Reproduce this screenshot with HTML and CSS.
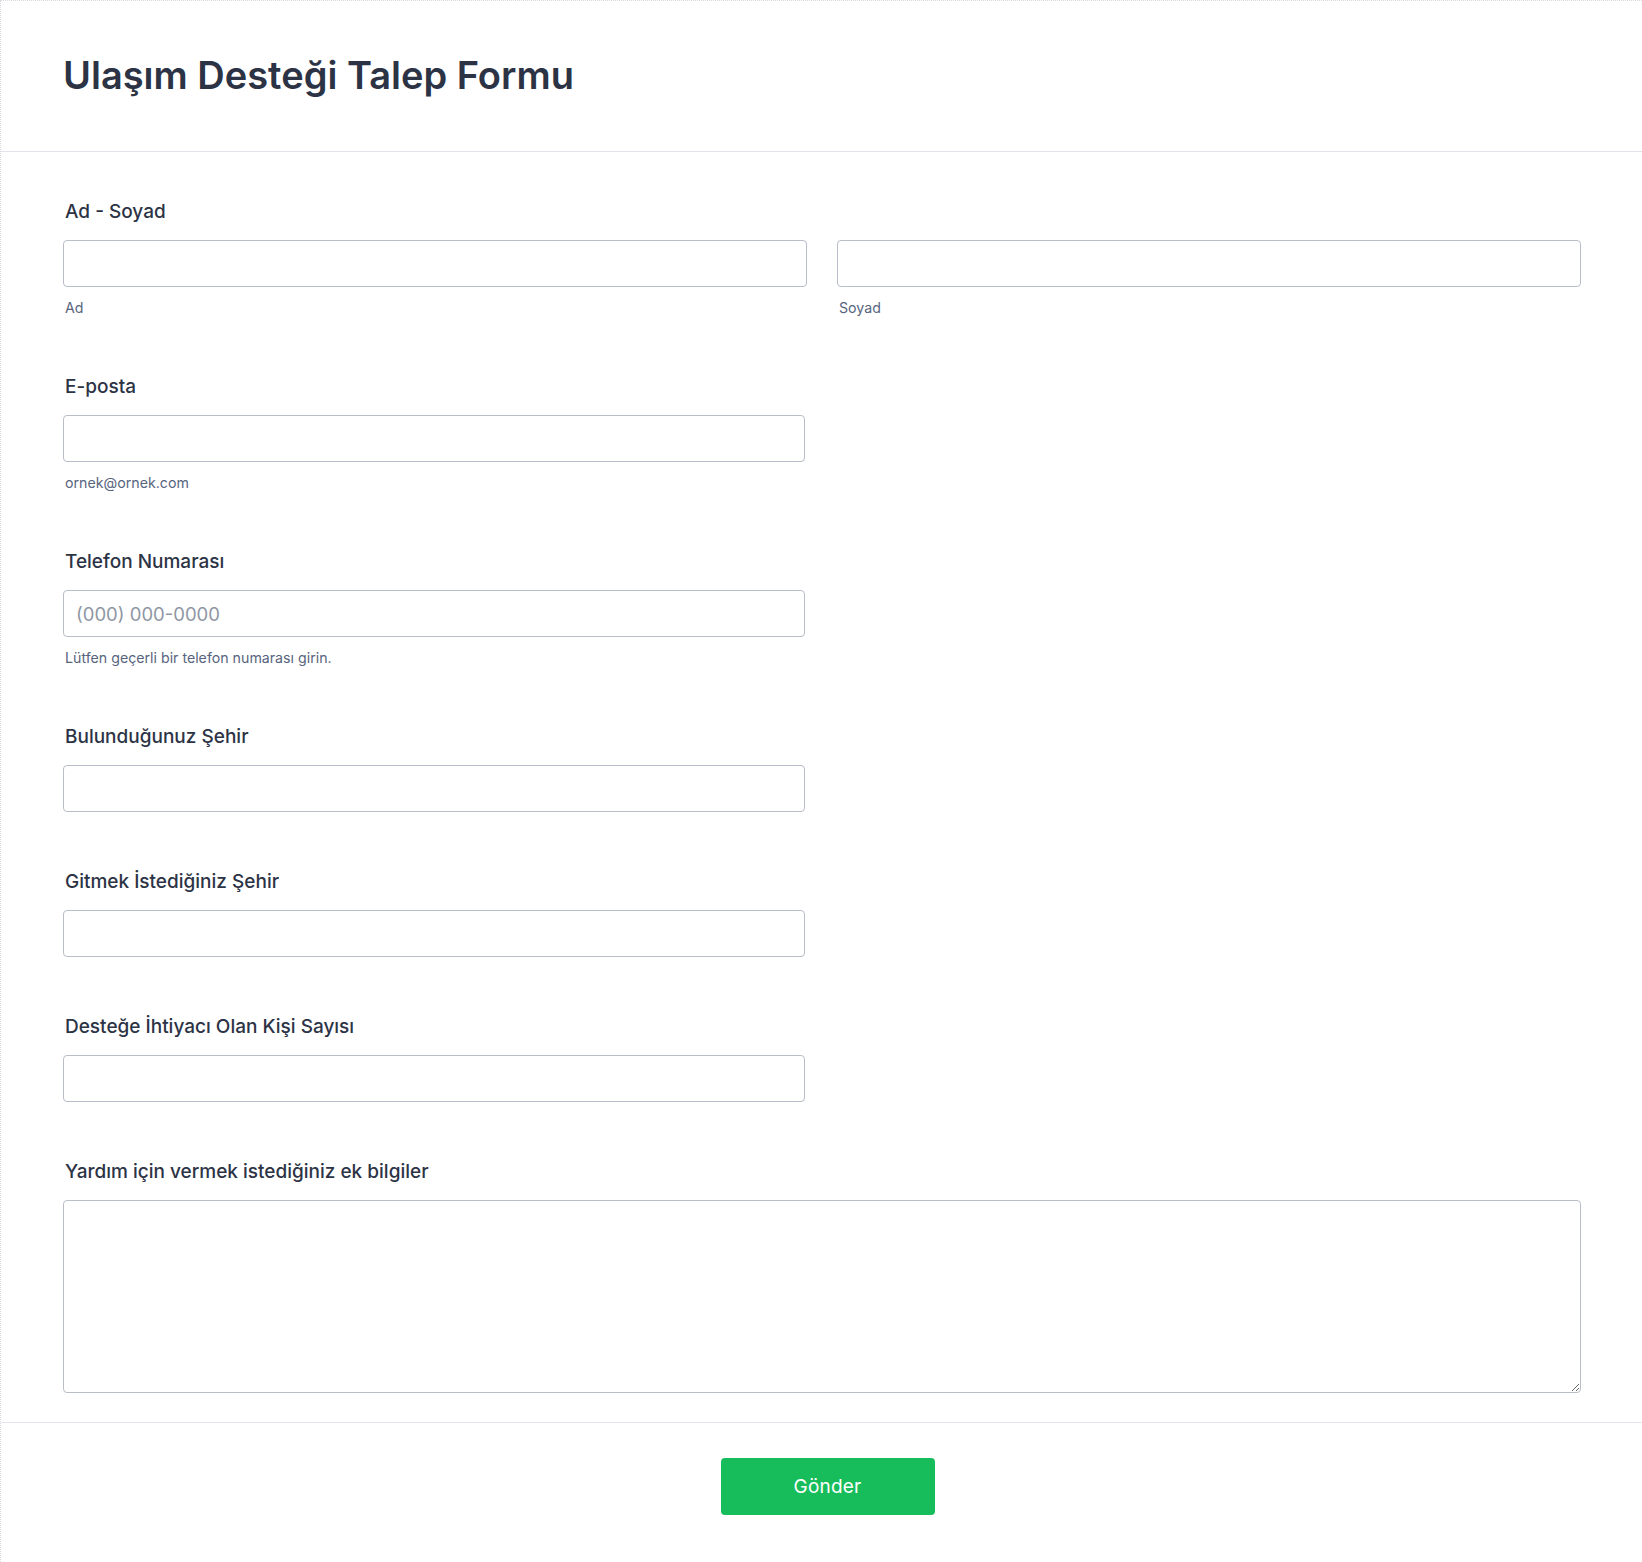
FILE: index.html
```html
<!DOCTYPE html>
<html lang="tr">
<head>
<meta charset="utf-8">
<title>Ulaşım Desteği Talep Formu</title>
<link rel="stylesheet" href="styles.css">
</head>
<body>
<form class="form">
  <header class="form-header">
    <h1 class="form-title">Ulaşım Desteği Talep Formu</h1>
  </header>
  <div class="fields">
    <div class="field">
      <label class="label">Ad - Soyad</label>
      <div class="row">
        <div class="col">
          <input class="input" type="text">
          <span class="sublabel">Ad</span>
        </div>
        <div class="col">
          <input class="input" type="text">
          <span class="sublabel">Soyad</span>
        </div>
      </div>
    </div>
    <div class="field">
      <label class="label">E-posta</label>
      <div class="half">
        <input class="input" type="email">
        <span class="sublabel">ornek@ornek.com</span>
      </div>
    </div>
    <div class="field">
      <label class="label">Telefon Numarası</label>
      <div class="half">
        <input class="input" type="tel" placeholder="(000) 000-0000">
        <span class="sublabel">Lütfen geçerli bir telefon numarası girin.</span>
      </div>
    </div>
    <div class="field">
      <label class="label">Bulunduğunuz Şehir</label>
      <div class="half"><input class="input" type="text"></div>
    </div>
    <div class="field">
      <label class="label">Gitmek İstediğiniz Şehir</label>
      <div class="half"><input class="input" type="text"></div>
    </div>
    <div class="field">
      <label class="label">Desteğe İhtiyacı Olan Kişi Sayısı</label>
      <div class="half"><input class="input" type="text"></div>
    </div>
    <div class="field">
      <label class="label">Yardım için vermek istediğiniz ek bilgiler</label>
      <textarea class="textarea"></textarea>
    </div>
  </div>
  <footer class="form-footer">
    <button class="submit" type="button">Gönder</button>
  </footer>
</form>
</body>
</html>
```
FILE: styles.css
```css
* { box-sizing: border-box; }
html, body {
  margin: 0;
  padding: 0;
  background: #ffffff;
}
body {
  font-family: Inter, "Noto Sans", "Liberation Sans", sans-serif;
  color: #2c3345;
}
.form {
  min-height: 1562px;
  border-top: 1px dotted #d9dbe3;
  border-left: 1px dotted #d9dbe3;
}
.form-header {
  height: 151px;
  padding: 0 62px;
  display: flex;
  align-items: center;
  border-bottom: 1px solid #e2e4ec;
}
.form-title {
  margin: 0 0 2px 0;
  font-size: 38px;
  font-weight: 600;
  line-height: 46px;
  color: #2c3345;
}
.fields {
  padding: 48px 61px 29px 62px;
  display: flex;
  flex-direction: column;
  gap: 58px;
}
.field {
  display: flex;
  flex-direction: column;
}
.label {
  display: block;
  font-size: 19px;
  font-weight: 500;
  line-height: 24px;
  margin: 0 0 16px 2px;
  color: #2c3345;
}
.row {
  display: flex;
  gap: 30px;
}
.col {
  flex: 1;
  display: flex;
  flex-direction: column;
}
.half {
  width: 742px;
  display: flex;
  flex-direction: column;
}
.input {
  display: block;
  width: 100%;
  height: 47px;
  border: 1px solid #b8bdc9;
  border-radius: 4px;
  padding: 0 12px;
  font-family: inherit;
  font-size: 18.5px;
  color: #2c3345;
  background: #fff;
}
.input::placeholder {
  color: #8f96a3;
}
.sublabel {
  display: block;
  margin: 12px 0 0 2px;
  font-size: 14.2px;
  line-height: 18px;
  color: #57647e;
}
.textarea {
  display: block;
  width: 100%;
  height: 193px;
  border: 1px solid #b8bdc9;
  border-radius: 4px;
  padding: 12px;
  font-family: inherit;
  font-size: 18px;
  resize: vertical;
  background: #fff;
}
.form-footer {
  border-top: 1px solid #e4e6ee;
  padding: 35px 0 0 12px;
  display: flex;
  justify-content: center;
}
.submit {
  width: 214px;
  height: 57px;
  border: 0;
  border-radius: 4px;
  background: #18bd5b;
  color: #ffffff;
  font-family: inherit;
  font-size: 19px;
  font-weight: 400;
  letter-spacing: 0.2px;
}
```
